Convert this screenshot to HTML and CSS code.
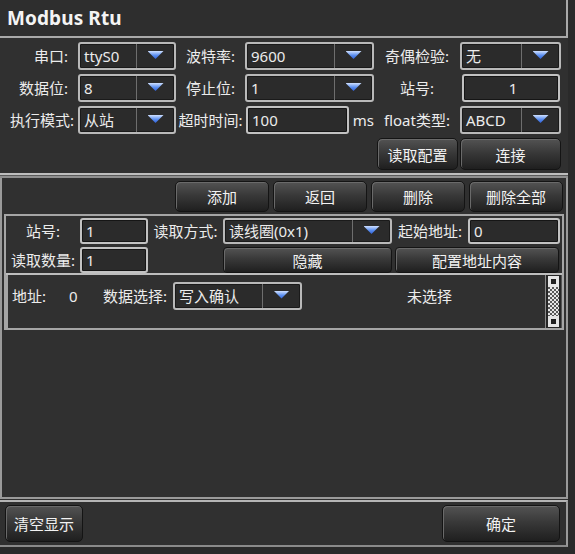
FILE: index.html
```html
<!DOCTYPE html>
<html lang="zh">
<head>
<meta charset="utf-8">
<title>Modbus Rtu</title>
<link rel="stylesheet" href="styles.css">
</head>
<body>
<div class="window">
  <header class="titlebar">Modbus Rtu</header>

  <section class="config">
    <label class="lbl lbl-r">串口:</label>
    <div class="combo"><span class="val">ttyS0</span><span class="drop"><i class="arrow"></i></span></div>
    <label class="lbl">波特率:</label>
    <div class="combo"><span class="val">9600</span><span class="drop"><i class="arrow"></i></span></div>
    <label class="lbl">奇偶检验:</label>
    <div class="combo"><span class="val">无</span><span class="drop"><i class="arrow"></i></span></div>

    <label class="lbl lbl-r">数据位:</label>
    <div class="combo"><span class="val">8</span><span class="drop"><i class="arrow"></i></span></div>
    <label class="lbl">停止位:</label>
    <div class="combo"><span class="val">1</span><span class="drop"><i class="arrow"></i></span></div>
    <label class="lbl">站号:</label>
    <div class="edit edit-c">1</div>

    <label class="lbl lbl-r lbl-wide">执行模式:</label>
    <div class="combo"><span class="val">从站</span><span class="drop"><i class="arrow"></i></span></div>
    <label class="lbl">超时时间:</label>
    <div class="edit-unit"><div class="edit">100</div><span class="unit">ms</span></div>
    <label class="lbl">float类型:</label>
    <div class="combo"><span class="val">ABCD</span><span class="drop"><i class="arrow"></i></span></div>

    <button class="btn btn-read">读取配置</button>
    <button class="btn btn-conn">连接</button>
  </section>

  <div class="sep"></div>

  <section class="panel">
    <div class="toolbar">
      <button class="btn tb">添加</button>
      <button class="btn tb">返回</button>
      <button class="btn tb">删除</button>
      <button class="btn tb">删除全部</button>
    </div>

    <div class="frame">
      <div class="form">
        <label class="lbl">站号:</label>
        <div class="edit edit-s">1</div>
        <label class="lbl">读取方式:</label>
        <div class="combo combo-s"><span class="val">读线圈(0x1)</span><span class="drop"><i class="arrow"></i></span></div>
        <label class="lbl">起始地址:</label>
        <div class="edit edit-s">0</div>

        <label class="lbl">读取数量:</label>
        <div class="edit edit-s">1</div>
        <span></span>
        <button class="btn btn-s">隐藏</button>
        <button class="btn btn-s btn-span">配置地址内容</button>
      </div>

      <div class="list">
        <div class="list-body">
          <div class="list-row">
            <span class="addr-lbl">地址:</span>
            <span class="addr-val">0</span>
            <span class="sel-lbl">数据选择:</span>
            <div class="combo combo-l"><span class="val">写入确认</span><span class="drop"><i class="arrow"></i></span></div>
            <span class="state">未选择</span>
          </div>
        </div>
        <div class="scroll">
          <span class="sq"></span>
          <span class="checker"></span>
          <span class="sq"></span>
        </div>
      </div>
    </div>
  </section>

  <footer class="footer">
    <button class="btn fb-clear">清空显示</button>
    <button class="btn fb-ok">确定</button>
  </footer>
</div>
</body>
</html>
```

FILE: styles.css
```css
* { box-sizing: border-box; }

html, body {
  margin: 0;
  padding: 0;
  background: #2a2a2a;
}

body {
  font-family: "Noto Sans", "Noto Sans CJK SC", sans-serif;
  font-size: 15px;
  color: #ececec;
  width: 575px;
  height: 554px;
  overflow: hidden;
}

.window {
  width: 568px;
  background: #303030;
}

.titlebar {
  height: 38px;
  padding: 5px 0 0 7px;
  font-size: 19px;
  font-weight: bold;
  color: #f4f4f4;
  background: #2e2e2e;
  border-right: 2px solid #a9a9a9;
  border-bottom: 2px solid #a9a9a9;
  line-height: 26px;
  letter-spacing: 0.1px;
}

/* ---------- config grid ---------- */
.config {
  display: grid;
  grid-template-columns: 78px 98px 69px 129px 86px 101px;
  grid-template-rows: 28px 28px 28px 32px;
  row-gap: 4px;
  padding-top: 4px;
  height: 135px;
  align-items: center;
}

.lbl {
  text-align: center;
  white-space: nowrap;
  line-height: 28px;
}

.lbl-r {
  text-align: right;
  padding-right: 10px;
}

.lbl-wide {
  padding-right: 4px;
}

.combo {
  display: flex;
  height: 28px;
  border: 2px solid #b9b9b9;
  border-radius: 3px;
  background: #2b2b2b;
  box-shadow: inset 0 0 0 1px #1a1a1a;
  overflow: hidden;
}

.combo .val {
  flex: 1;
  padding-left: 4px;
  line-height: 24px;
  white-space: nowrap;
}

.combo .drop {
  width: 38px;
  border-left: 1px solid #6e6e6e;
  display: flex;
  align-items: center;
  justify-content: center;
}

.arrow {
  display: block;
  width: 16px;
  height: 8px;
  margin-top: -2px;
  background: linear-gradient(#cfe0ff, #5a8ef0 55%, #2f5fd6);
  clip-path: polygon(0 0, 100% 0, 50% 100%);
}

.edit {
  height: 28px;
  border: 2px solid #c2c2c2;
  border-radius: 3px;
  background: #2b2b2b;
  box-shadow: inset 0 0 0 1px #151515;
  padding-left: 4px;
  line-height: 24px;
}

.edit-c {
  text-align: center;
  margin-left: 2px;
  margin-right: 1px;
}

.edit-unit {
  display: flex;
  align-items: center;
  margin-left: 1px;
}

.edit-unit .edit {
  width: 104px;
}

.unit {
  margin-left: 4px;
}

.btn {
  font-family: inherit;
  font-size: 15px;
  color: #f2f2f2;
  border: 1px solid #141414;
  border-radius: 5px;
  background: linear-gradient(#535353, #393939 45%, #1f1f1f);
  box-shadow: inset 1px 1px 0 #6a6a6a;
  padding: 0;
  cursor: default;
}

.btn-read {
  grid-column: 5;
  grid-row: 4;
  height: 32px;
  margin-left: 3px;
  margin-right: 2px;
}

.btn-conn {
  grid-column: 6;
  grid-row: 4;
  height: 32px;
}

/* ---------- separator ---------- */
.sep {
  height: 5px;
  border-top: 2px solid #bdbdbd;
  border-bottom: 2px solid #8f8f8f;
  background: #5a5a5a;
}

/* ---------- panel ---------- */
.panel {
  height: 321px;
  border-left: 2px solid #9a9a9a;
  border-right: 2px solid #9a9a9a;
  border-bottom: 2px solid #9a9a9a;
  padding: 3px 2px 0 2px;
}

.toolbar {
  display: flex;
  justify-content: flex-end;
  gap: 4px;
  padding-right: 1px;
}

.btn.tb {
  width: 94px;
  height: 31px;
}

.frame {
  margin-top: 2px;
  border-top: 2px solid #a5a5a5;
  border-left: 2px solid #a5a5a5;
  border-right: 2px solid #a5a5a5;
  padding-top: 2px;
}

.form {
  display: grid;
  grid-template-columns: 74px 68px 75px 169px 76px 92px;
  grid-template-rows: 26px 26px;
  row-gap: 3px;
  align-items: center;
}

.form .lbl {
  line-height: 26px;
}

.edit-s {
  height: 26px;
  line-height: 22px;
}

.combo-s {
  height: 26px;
}

.combo-s .val {
  line-height: 22px;
}

.combo-s .drop {
  width: 38px;
}

.btn-s {
  height: 26px;
  border-radius: 4px;
}

.btn-span {
  grid-column: 5 / span 2;
  margin-left: 3px;
  margin-right: 1px;
}

/* ---------- list ---------- */
.list {
  display: flex;
  height: 57px;
  border-top: 2px solid #bdbdbd;
  border-bottom: 2px solid #a5a5a5;
}

.list-body {
  flex: 1;
  border-left: 2px solid #a5a5a5;
  border-right: 1px solid #8a8a8a;
}

.list-row {
  display: flex;
  align-items: center;
  height: 36px;
  padding-top: 5px;
}

.addr-lbl {
  margin-left: 4px;
  width: 57px;
}

.addr-val {
  width: 34px;
}

.sel-lbl {
  width: 70px;
}

.combo-l {
  width: 129px;
  border-radius: 3px;
}

.combo-l .drop {
  width: 38px;
}

.state {
  margin-left: 105px;
}

.scroll {
  width: 16px;
  display: flex;
  flex-direction: column;
  align-items: center;
  padding: 1px 0;
  background: #262626;
  border-right: 1px solid #555;
}

.sq {
  width: 11px;
  height: 11px;
  border: 2px solid #e6e6e6;
  background: #2a2a2a;
  box-shadow: inset 0 0 0 1px #e6e6e6, inset 0 0 0 3px #202020;
}

.checker {
  flex: 1;
  width: 11px;
  background: repeating-conic-gradient(#e8e8e8 0 25%, #5a5a5a 0 50%) 0 0 / 4px 4px;
}

/* ---------- footer ---------- */
.footer {
  display: flex;
  justify-content: space-between;
  align-items: center;
  height: 47px;
  margin-top: 1px;
  border-top: 2px solid #b5b5b5;
  border-right: 2px solid #9a9a9a;
  border-bottom: 2px solid #8a8a8a;
  padding: 0 6px 0 5px;
}

.fb-clear {
  width: 78px;
  height: 37px;
}

.fb-ok {
  width: 118px;
  height: 37px;
}
```
